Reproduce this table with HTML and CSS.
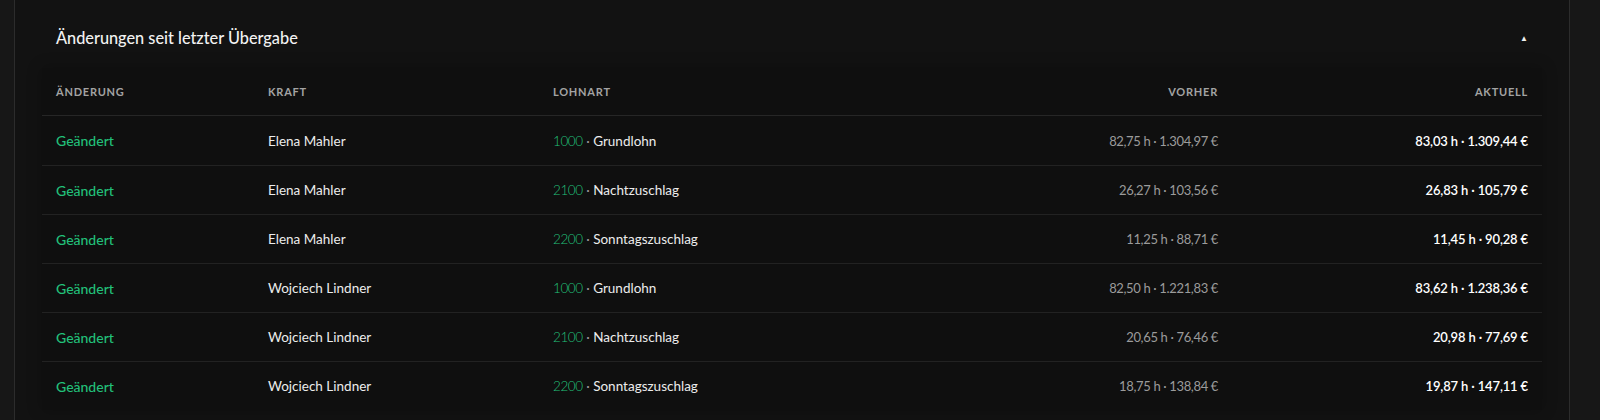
FILE: index.html
```html
<!DOCTYPE html>
<html lang="de">
<head>
<meta charset="utf-8">
<title>Änderungen seit letzter Übergabe</title>
<link rel="stylesheet" href="styles.css">
</head>
<body>
<div class="page">
  <section class="panel">
    <header class="panel-head">
      <h2 class="panel-title">Änderungen seit letzter Übergabe</h2>
      <span class="caret">▲</span>
    </header>
    <div class="table">
      <div class="row head">
        <div class="cell">Änderung</div>
        <div class="cell">Kraft</div>
        <div class="cell">Lohnart</div>
        <div class="cell num">Vorher</div>
        <div class="cell num">Aktuell</div>
      </div>
      <div class="row">
        <div class="cell status">Geändert</div>
        <div class="cell">Elena Mahler</div>
        <div class="cell"><span class="code">1000</span><span class="sep"> · </span>Grundlohn</div>
        <div class="cell num old">82,75 h · 1.304,97 €</div>
        <div class="cell num new">83,03 h · 1.309,44 €</div>
      </div>
      <div class="row">
        <div class="cell status">Geändert</div>
        <div class="cell">Elena Mahler</div>
        <div class="cell"><span class="code">2100</span><span class="sep"> · </span>Nachtzuschlag</div>
        <div class="cell num old">26,27 h · 103,56 €</div>
        <div class="cell num new">26,83 h · 105,79 €</div>
      </div>
      <div class="row">
        <div class="cell status">Geändert</div>
        <div class="cell">Elena Mahler</div>
        <div class="cell"><span class="code">2200</span><span class="sep"> · </span>Sonntagszuschlag</div>
        <div class="cell num old">11,25 h · 88,71 €</div>
        <div class="cell num new">11,45 h · 90,28 €</div>
      </div>
      <div class="row">
        <div class="cell status">Geändert</div>
        <div class="cell">Wojciech Lindner</div>
        <div class="cell"><span class="code">1000</span><span class="sep"> · </span>Grundlohn</div>
        <div class="cell num old">82,50 h · 1.221,83 €</div>
        <div class="cell num new">83,62 h · 1.238,36 €</div>
      </div>
      <div class="row">
        <div class="cell status">Geändert</div>
        <div class="cell">Wojciech Lindner</div>
        <div class="cell"><span class="code">2100</span><span class="sep"> · </span>Nachtzuschlag</div>
        <div class="cell num old">20,65 h · 76,46 €</div>
        <div class="cell num new">20,98 h · 77,69 €</div>
      </div>
      <div class="row">
        <div class="cell status">Geändert</div>
        <div class="cell">Wojciech Lindner</div>
        <div class="cell"><span class="code">2200</span><span class="sep"> · </span>Sonntagszuschlag</div>
        <div class="cell num old">18,75 h · 138,84 €</div>
        <div class="cell num new">19,87 h · 147,11 €</div>
      </div>
    </div>
  </section>
</div>
</body>
</html>
```

FILE: styles.css
```css
* { box-sizing: border-box; }
html, body { margin: 0; padding: 0; }
body {
  background: #171717;
  font-family: "Lato", "Noto Sans", sans-serif;
  color: #ececec;
  height: 420px;
  overflow: hidden;
}
.page {
  padding-left: 14px;
}
.panel {
  width: 1556px;
  height: 440px;
  background: #121212;
  border-left: 1px solid #2c2c2c;
  border-right: 1px solid #2c2c2c;
  padding: 0 27px;
}
.panel-head {
  display: flex;
  align-items: center;
  justify-content: space-between;
  padding: 25px 14px 18px;
  height: 68px;
}
.panel-title {
  margin: 0;
  font-size: 16.3px;
  font-weight: 500;
  color: #f2f2f2;
  line-height: 24px;
}
.caret {
  font-size: 8px;
  color: #f0f0f0;
  margin-right: 0;
}
.table {
  background: #0f0f0f;
  box-shadow: 0 0 14px rgba(0,0,0,0.25);
}
.row {
  display: grid;
  grid-template-columns: 212px 285px 360px 333px 310px;
  height: 49px;
  align-items: center;
  border-top: 1px solid #222222;
}
.row.head {
  border-top: none;
  height: 48px;
  border-bottom: 1px solid #262626;
}
.row.head + .row { border-top: none; }
.cell {
  padding: 0 14px;
  font-size: 13.5px;
  white-space: nowrap;
}
.row.head .cell {
  font-size: 11px;
  font-weight: 700;
  letter-spacing: 0.07em;
  text-transform: uppercase;
  color: #a3a3a3;
}
.num { text-align: right; }
.status { color: #22c07a; font-weight: 500; font-size: 14px; }
.code { color: #22c07a; font-weight: 300; letter-spacing: -0.4px; }
.sep { color: #9a9a9a; }
.old { color: #9b9b9b; font-weight: 400; font-size: 13px; letter-spacing: -0.35px; }
.new { color: #ffffff; font-weight: 600; font-size: 13px; letter-spacing: -0.15px; }
```
